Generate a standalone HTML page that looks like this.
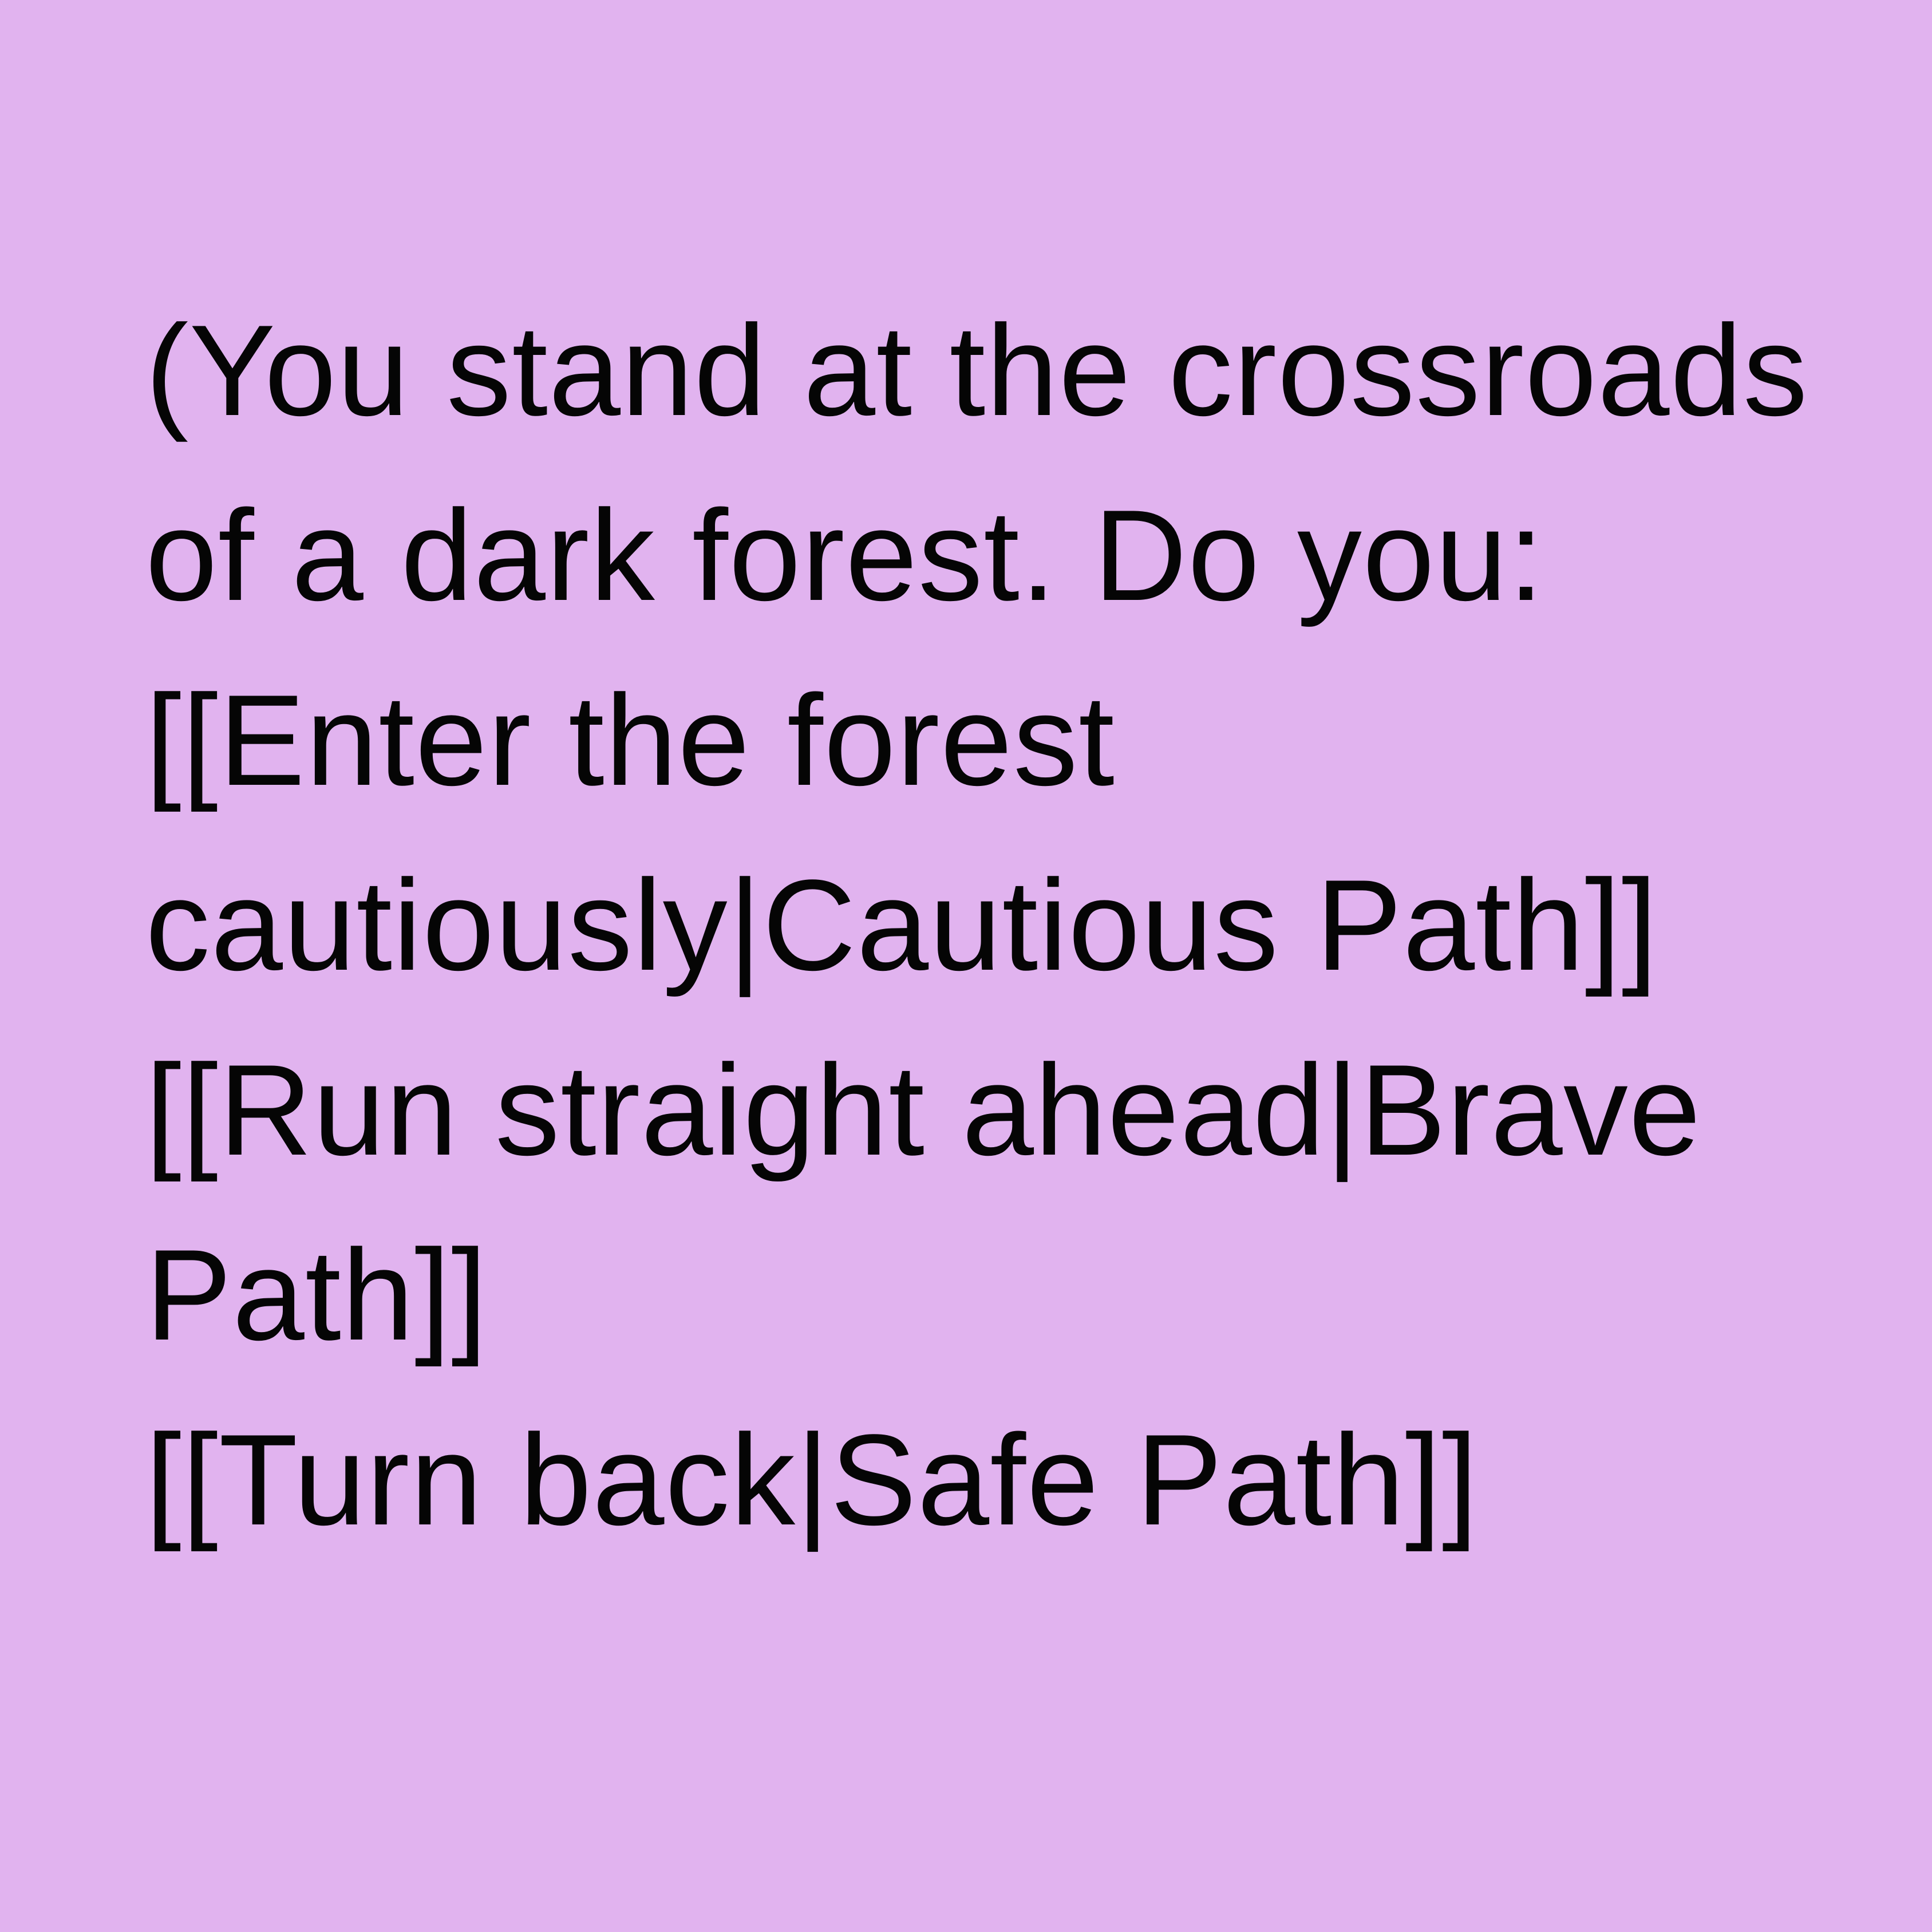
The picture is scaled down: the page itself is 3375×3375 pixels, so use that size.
<!DOCTYPE html>
<html><head><meta charset="utf-8"><style>
html,body{margin:0;padding:0;}
body{width:3375px;height:3375px;background:#e1b3ef;position:relative;overflow:hidden;}
.t{position:absolute;left:254px;top:485px;font-family:"Liberation Sans",sans-serif;font-size:226px;line-height:323px;letter-spacing:1.3px;color:#050505;white-space:nowrap;}
</style></head><body>
<div class="t">(You stand at the crossroads<br>of a dark forest. Do you:<br>[[Enter the forest<br>cautiously|Cautious Path]]<br>[[Run straight ahead|Brave<br>Path]]<br>[[Turn back|Safe Path]]</div>
</body></html>
